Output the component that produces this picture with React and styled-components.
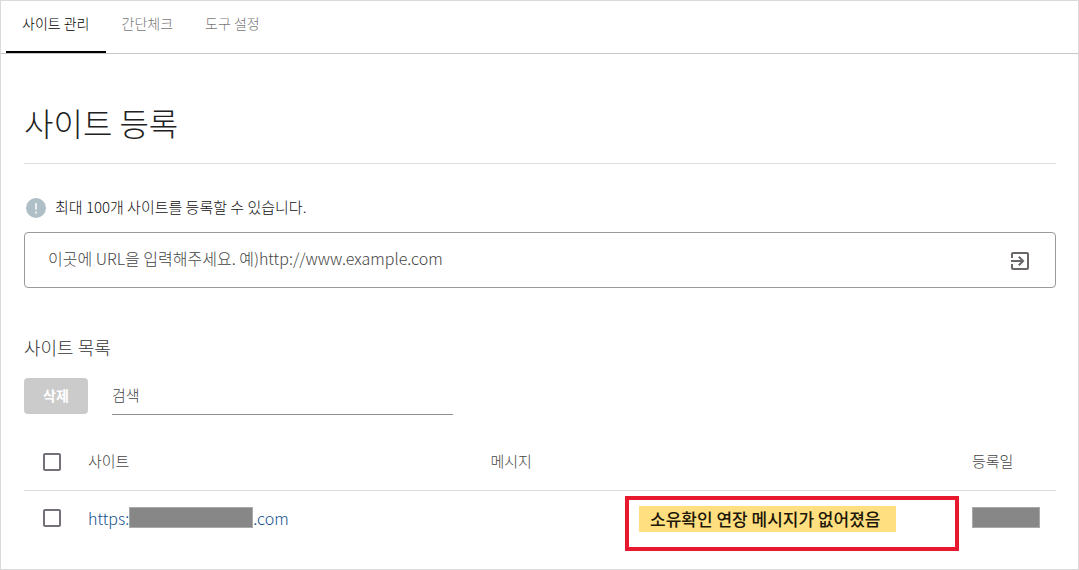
import React, { useState } from "react";
import styled, { createGlobalStyle } from "styled-components";

const GlobalStyle = createGlobalStyle`
  * { box-sizing: border-box; }

  body {
    margin: 0;
    background: #fff;
    color: #333;
    font-family: "Noto Sans CJK KR", "Noto Sans", sans-serif;
    font-weight: 300;
  }

  button, input { font-family: inherit; font-weight: inherit; }
`;

const Page = styled.div`
  min-height: 100vh;
  border: 1px solid #dadada;
`;

const Tabs = styled.nav`
  display: flex;
  padding: 0 5px;
  border-bottom: 1px solid #c6c6c6;
`;

const Tab = styled.button`
  height: 52px;
  padding: 0 16px 6px;
  border: 0;
  border-bottom: 2px solid ${({ $active }) => ($active ? "#000" : "transparent")};
  background: transparent;
  color: ${({ $active }) => ($active ? "#000" : "#777")};
  font-size: 14px;
  cursor: pointer;
`;

const Content = styled.main`
  padding: 44px 22px 0 23px;
`;

const Title = styled.h1`
  margin: 0;
  padding-bottom: 17px;
  border-bottom: 1px solid #dedede;
  color: #212121;
  font-size: 32px;
  font-weight: 300;
  line-height: 48px;
`;

const Notice = styled.p`
  display: flex;
  align-items: center;
  gap: 8px;
  margin: 32px 0 12px;
  padding-left: 1px;
  font-size: 15px;
  line-height: 24px;
  color: #111;
`;

const NoticeText = styled.span`
  padding-bottom: 2px;
  line-height: 22px;
`;

const UrlBox = styled.form`
  display: flex;
  align-items: center;
  height: 56px;
  padding: 0 23px;
  border: 1px solid #9a9a9a;
  border-radius: 4px;
`;

const UrlInput = styled.input`
  flex: 1;
  min-width: 0;
  padding: 0 0 4px;
  border: 0;
  outline: none;
  background: transparent;
  font-size: 16px;

  &::placeholder { color: #444; opacity: 1; }
`;

const IconButton = styled.button`
  display: flex;
  padding: 2px 0 0;
  border: 0;
  background: transparent;
  color: #6c666b;
  cursor: pointer;
`;

const ListTitle = styled.h2`
  margin: 45px 0 17px;
  font-size: 18px;
  font-weight: 300;
  line-height: 28px;
`;

const Toolbar = styled.div`
  display: flex;
  align-items: flex-start;
  gap: 24px;
`;

const DeleteButton = styled.button`
  width: 64px;
  height: 36px;
  padding: 0 0 3px;
  border: 0;
  border-radius: 4px;
  background: #cbcbcb;
  color: #fff;
  font-size: 14px;
  font-weight: 700;
`;

const SearchInput = styled.input`
  width: 33%;
  height: 37px;
  padding: 0 0 4px;
  border: 0;
  border-bottom: 1px solid #8f8f8f;
  outline: none;
  background: transparent;
  font-size: 15px;

  &::placeholder { color: #444; opacity: 1; }
`;

const Table = styled.table`
  width: 100%;
  margin-top: 18px;
  border-collapse: collapse;
  table-layout: fixed;
`;

const HeadCell = styled.th`
  width: ${({ $width }) => $width || "auto"};
  height: 57px;
  padding: 0 0 2px;
  border-bottom: 1px solid #dcdcdc;
  color: #444;
  font-size: 15px;
  font-weight: 300;
  text-align: left;
`;

const CheckHeadCell = styled(HeadCell)`
  padding: 2px 0 0;
`;

const Cell = styled.td`
  height: 66px;
  padding: ${({ $raised }) => ($raised ? "0 0 11px" : "0")};
  font-size: 16px;
`;

const Check = styled.input.attrs({ type: "checkbox" })`
  appearance: none;
  display: block;
  width: 18px;
  height: 18px;
  margin: 0 0 0 19px;
  border: 2px solid #756f78;
  border-radius: 2px;
  background: #fff;

  &:checked { background: #756f78; }
`;

const SiteLink = styled.a`
  display: flex;
  align-items: center;
  color: #14508f;
  line-height: 22px;
  text-decoration: none;
`;

const Masked = styled.span`
  display: block;
  width: ${({ $width }) => $width};
  height: 21px;
  border: 1px solid #a9a9a9;
  background: #878787;
`;

const Highlight = styled.div`
  display: flex;
  align-items: flex-start;
  width: 334px;
  height: 55px;
  margin: 0 13px 0 auto;
  padding: 6px 10px;
  border: 4px solid #e8192f;
`;

const Message = styled.strong`
  padding: 0 16px 0 11px;
  background: #ffdf80;
  color: #1c1708;
  font-size: 17px;
  font-weight: 500;
  line-height: 26px;
  white-space: nowrap;
`;

function NoticeIcon() {
  return (
    <svg width="22" height="22" viewBox="0 0 22 22" aria-hidden="true">
      <circle cx="11" cy="11" r="10" fill="#afbfc7" />
      <path d="M11 6v6.5M11 14.5v2" stroke="#fff" strokeWidth="1.5" />
    </svg>
  );
}

function EnterIcon() {
  return (
    <svg width="24" height="24" viewBox="0 0 24 24" fill="currentColor" aria-hidden="true">
      <path d="M10.09 15.59L11.5 17l5-5-5-5-1.41 1.41L12.67 11H3v2h9.67l-2.58 2.59zM19 3H5c-1.11 0-2 .9-2 2v4h2V5h14v14H5v-4H3v4c0 1.1.89 2 2 2h14c1.1 0 2-.9 2-2V5c0-1.1-.9-2-2-2z" />
    </svg>
  );
}

const TABS = ["사이트 관리", "간단체크", "도구 설정"];

export default function App() {
  const [tab, setTab] = useState(TABS[0]);
  const [checked, setChecked] = useState(false);

  return (
    <Page>
      <GlobalStyle />
      <Tabs>
        {TABS.map((name) => (
          <Tab key={name} $active={name === tab} onClick={() => setTab(name)}>
            {name}
          </Tab>
        ))}
      </Tabs>

      <Content>
        <Title>사이트 등록</Title>

        <Notice>
          <NoticeIcon />
          <NoticeText>최대 100개 사이트를 등록할 수 있습니다.</NoticeText>
        </Notice>
        <UrlBox onSubmit={(e) => e.preventDefault()}>
          <UrlInput
            aria-label="사이트 URL"
            placeholder="이곳에 URL을 입력해주세요. 예)http://www.example.com"
          />
          <IconButton aria-label="등록">
            <EnterIcon />
          </IconButton>
        </UrlBox>

        <ListTitle>사이트 목록</ListTitle>
        <Toolbar>
          <DeleteButton disabled={!checked}>삭제</DeleteButton>
          <SearchInput aria-label="검색" placeholder="검색" />
        </Toolbar>

        <Table>
          <thead>
            <tr>
              <CheckHeadCell $width="64px">
                <Check
                  aria-label="전체 선택"
                  checked={checked}
                  onChange={(e) => setChecked(e.target.checked)}
                />
              </CheckHeadCell>
              <HeadCell $width="39%">사이트</HeadCell>
              <HeadCell>메시지</HeadCell>
              <HeadCell $width="84px">등록일</HeadCell>
            </tr>
          </thead>
          <tbody>
            <tr>
              <Cell $raised>
                <Check
                  aria-label="사이트 선택"
                  checked={checked}
                  onChange={(e) => setChecked(e.target.checked)}
                />
              </Cell>
              <Cell $raised>
                <SiteLink href="#site">
                  https:
                  <Masked $width="124px" />
                  .com
                </SiteLink>
              </Cell>
              <Cell>
                <Highlight>
                  <Message>소유확인 연장 메시지가 없어졌음</Message>
                </Highlight>
              </Cell>
              <Cell $raised>
                <Masked $width="68px" />
              </Cell>
            </tr>
          </tbody>
        </Table>
      </Content>
    </Page>
  );
}
